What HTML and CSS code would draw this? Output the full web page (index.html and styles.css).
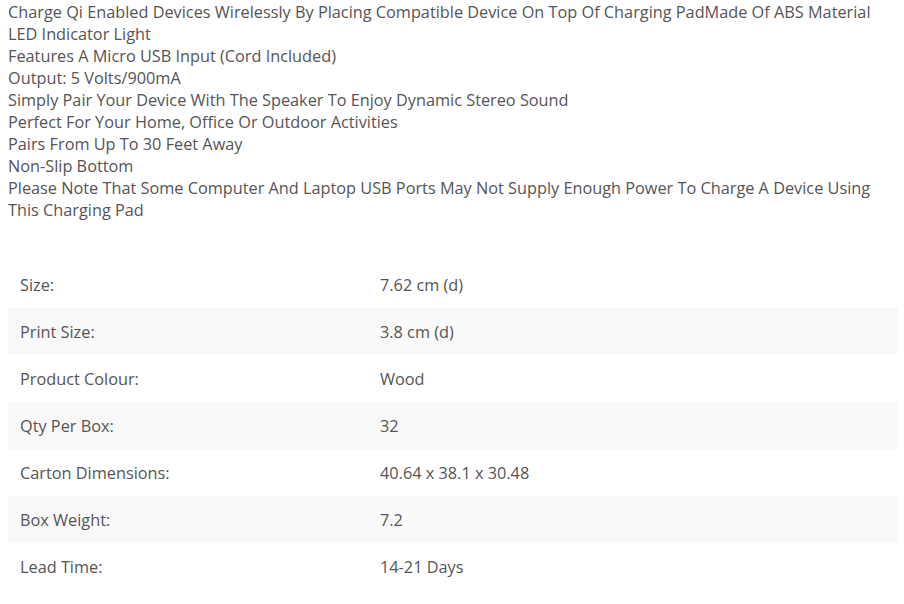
FILE: index.html
```html
<!DOCTYPE html>
<html>
<head>
<meta charset="utf-8">
<link rel="stylesheet" href="styles.css">
</head>
<body>
<div class="page">
  <div class="desc">
    Charge Qi Enabled Devices Wirelessly By Placing Compatible Device On Top Of Charging PadMade Of ABS Material<br>
    LED Indicator Light<br>
    Features A Micro USB Input (Cord Included)<br>
    Output: 5 Volts/900mA<br>
    Simply Pair Your Device With The Speaker To Enjoy Dynamic Stereo Sound<br>
    Perfect For Your Home, Office Or Outdoor Activities<br>
    Pairs From Up To 30 Feet Away<br>
    Non-Slip Bottom<br>
    Please Note That Some Computer And Laptop USB Ports May Not Supply Enough Power To Charge A Device Using This Charging Pad
  </div>
  <table class="specs">
    <tr><td class="label">Size:</td><td class="value">7.62 cm (d)</td></tr>
    <tr><td class="label">Print Size:</td><td class="value">3.8 cm (d)</td></tr>
    <tr><td class="label">Product Colour:</td><td class="value">Wood</td></tr>
    <tr><td class="label">Qty Per Box:</td><td class="value">32</td></tr>
    <tr><td class="label">Carton Dimensions:</td><td class="value">40.64 x 38.1 x 30.48</td></tr>
    <tr><td class="label">Box Weight:</td><td class="value">7.2</td></tr>
    <tr><td class="label">Lead Time:</td><td class="value">14-21 Days</td></tr>
  </table>
</div>
</body>
</html>
```

FILE: styles.css
```css
html, body {
  margin: 0;
  padding: 0;
  background: #fff;
}
body {
  font-family: "Open Sans", sans-serif;
  font-size: 16.3px;
  line-height: 22px;
  color: #555;
}
.page {
  width: 890px;
  padding: 1px 0 0 8px;
}
.desc {
  margin: 0;
}
.specs {
  width: 890px;
  border-collapse: collapse;
  margin-top: 40px;
}
.specs td {
  height: 47px;
  padding: 0 12px;
  box-sizing: border-box;
  vertical-align: middle;
}
.specs .label {
  width: 360px;
}
.specs tr:nth-child(even) td {
  background: #f9f9f9;
}
```
